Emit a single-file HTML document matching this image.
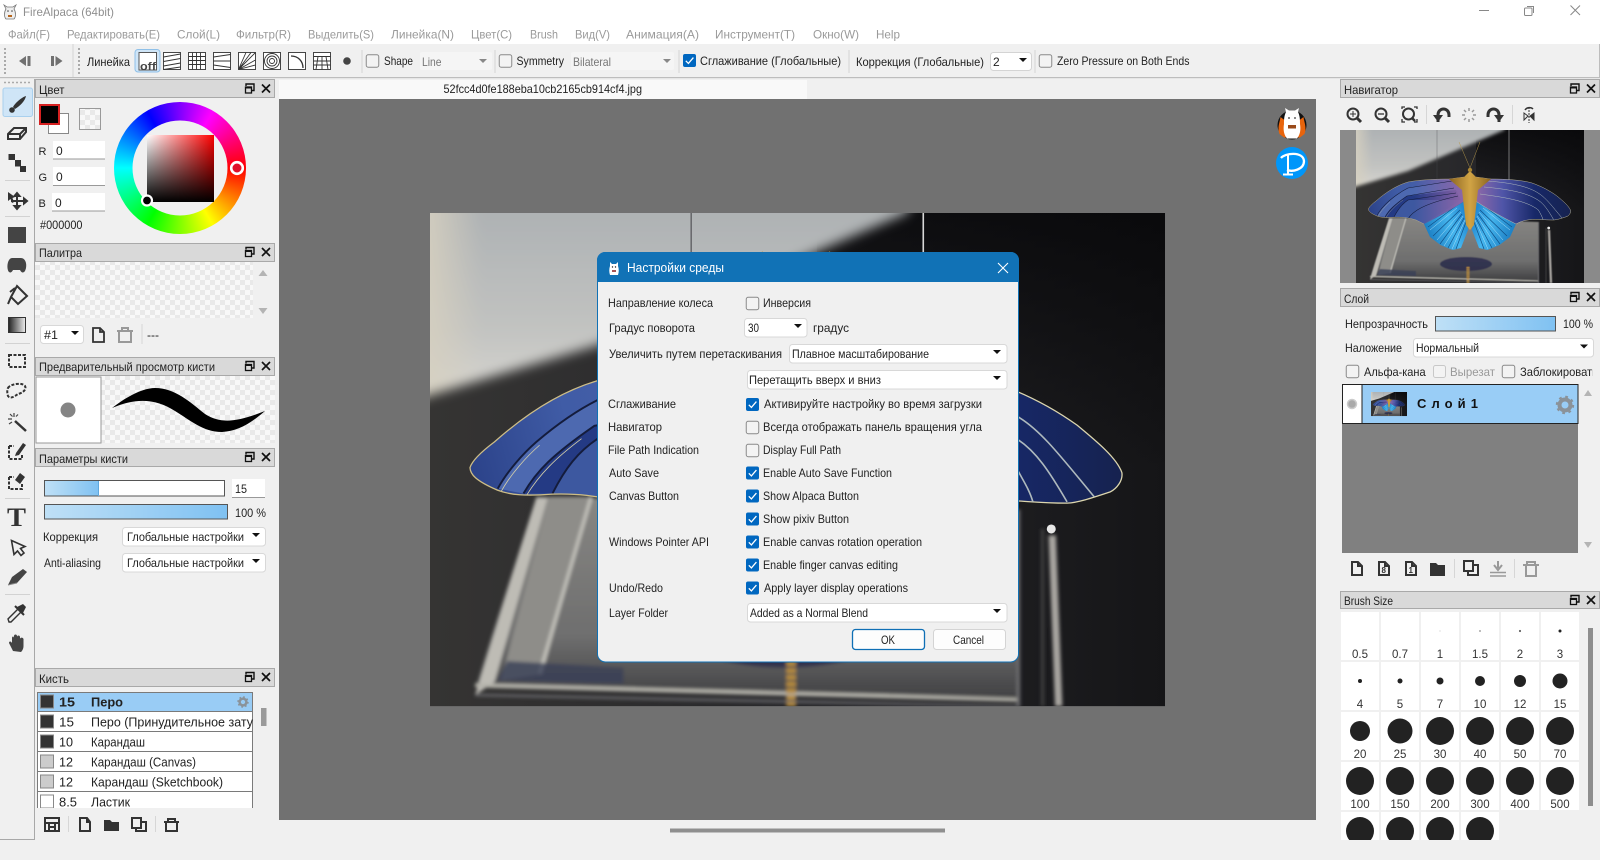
<!DOCTYPE html>
<html lang="ru"><head><meta charset="utf-8"><title>FireAlpaca</title>
<style>
html,body{margin:0;padding:0;width:1600px;height:860px;overflow:hidden;background:#f0f0f0}
svg{display:block;font-family:"Liberation Sans","Noto Sans CJK JP",sans-serif;font-size:12px;fill:#222}
</style></head><body>
<svg xmlns="http://www.w3.org/2000/svg" width="1600" height="860" viewBox="0 0 1600 860">
<defs>
<pattern id="chk" width="10" height="10" patternUnits="userSpaceOnUse"><rect width="10" height="10" fill="#f8f8f8"/><rect width="5" height="5" fill="#e9e9e9"/><rect x="5" y="5" width="5" height="5" fill="#e9e9e9"/></pattern>
<linearGradient id="blueBar" x1="0" x2="1" y1="0" y2="0"><stop offset="0" stop-color="#bfe0f6"/><stop offset="1" stop-color="#7fc1f2"/></linearGradient>
<linearGradient id="sqW" x1="0" x2="1" y1="0" y2="0"><stop offset="0" stop-color="#fff"/><stop offset="1" stop-color="#f00"/></linearGradient>
<linearGradient id="sqK" x1="0" x2="0" y1="0" y2="1"><stop offset="0" stop-color="#000" stop-opacity="0"/><stop offset="1" stop-color="#000"/></linearGradient>
<linearGradient id="grad" x1="0" x2="1" y1="0" y2="0"><stop offset="0" stop-color="#222"/><stop offset="1" stop-color="#eee"/></linearGradient>
<linearGradient id="artBg" x1="0" x2="1" y1="0" y2="0"><stop offset="0" stop-color="#353433"/><stop offset=".5" stop-color="#27272a"/><stop offset=".75" stop-color="#1e1e21"/><stop offset="1" stop-color="#151517"/></linearGradient>
<linearGradient id="artTop" gradientUnits="userSpaceOnUse" x1="0" y1="0" x2="0" y2="80"><stop offset="0" stop-color="#060608" stop-opacity=".75"/><stop offset="1" stop-color="#060608" stop-opacity="0"/></linearGradient>
<linearGradient id="wallV" gradientUnits="userSpaceOnUse" x1="0" y1="0" x2="0" y2="56"><stop offset="0" stop-color="#aeb2b4"/><stop offset=".65" stop-color="#c2c3c1"/><stop offset="1" stop-color="#d6d5d0"/></linearGradient>
<linearGradient id="wallL" gradientUnits="userSpaceOnUse" x1="0" y1="0" x2="16" y2="0"><stop offset="0" stop-color="#d6d0c0" stop-opacity=".85"/><stop offset="1" stop-color="#d6d0c0" stop-opacity="0"/></linearGradient>
<linearGradient id="glassG" gradientUnits="userSpaceOnUse" x1="0" y1="88" x2="0" y2="150"><stop offset="0" stop-color="#878683"/><stop offset=".7" stop-color="#6e6e6e"/><stop offset="1" stop-color="#424244"/></linearGradient>
<linearGradient id="wingU" gradientUnits="userSpaceOnUse" x1="12" y1="80" x2="105" y2="55"><stop offset="0" stop-color="#2b4289"/><stop offset=".35" stop-color="#405ca6"/><stop offset="1" stop-color="#4b62aa"/></linearGradient>
<linearGradient id="wingP" gradientUnits="userSpaceOnUse" x1="58" y1="0" x2="106" y2="0"><stop offset="0" stop-color="#8a62aa" stop-opacity="0"/><stop offset="1" stop-color="#8e66a8" stop-opacity=".95"/></linearGradient>
<linearGradient id="wingRf" gradientUnits="userSpaceOnUse" x1="215" y1="0" x2="120" y2="0"><stop offset="0" stop-color="#16224f"/><stop offset=".38" stop-color="#172868"/><stop offset=".72" stop-color="#4f55a8"/><stop offset="1" stop-color="#8e68a8"/></linearGradient>
<linearGradient id="wingD" gradientUnits="userSpaceOnUse" x1="70" y1="100" x2="110" y2="85"><stop offset="0" stop-color="#1c7fc4"/><stop offset=".6" stop-color="#46b6ee"/><stop offset="1" stop-color="#2388d0"/></linearGradient>
<linearGradient id="gold" x1="0" x2="1" y1="0" y2="0"><stop offset="0" stop-color="#8a6420"/><stop offset=".5" stop-color="#d1a445"/><stop offset="1" stop-color="#8a6420"/></linearGradient>
<clipPath id="artclip"><rect width="228" height="153"/></clipPath>
<clipPath id="wlclip"><path d="M108 47L93 49C78 49 62 50 52 52C40 55.500 29 63 20 71C16 74 13 77 12.400 79C12.500 81 14 83 21 86C25 87.500 29.500 87.800 38 87.200C45 87 52 87.500 60 90L68 94C80 88 95 80 110 70Z"/></clipPath>
<clipPath id="listclip"><rect x="37" y="692" width="216" height="116"/></clipPath>
<clipPath id="gridclip"><rect x="1340" y="610" width="250" height="230"/></clipPath>
<clipPath id="c1"><rect x="1360" y="360" width="66" height="24"/></clipPath>
<clipPath id="c2"><rect x="1448" y="360" width="47" height="24"/></clipPath>
<clipPath id="c3"><rect x="1518" y="360" width="75" height="24"/></clipPath>
<filter id="bl" x="-10%" y="-10%" width="120%" height="120%"><feGaussianBlur stdDeviation=".6"/></filter>
<filter id="bl2" x="-10%" y="-10%" width="120%" height="120%"><feGaussianBlur stdDeviation="1.800"/></filter>
<g id="wingLow">
 <path d="M68 94C80 88 95 80 110 70L112 100 105 118 96.600 120 84.500 115 74 107Z" fill="url(#wingD)"/>
 <path d="M72 97L100 76M77 106L104 80M84 114L106 84M92 118L108 88M100 119L110 92" stroke="#0f4f86" stroke-width=".7" fill="none"/>
 <path d="M74 100L101 78M81 110L105 82M88 116L107 86M96 119L109 90" stroke="#a9e2fa" stroke-width=".5" fill="none"/>
</g>
<g id="art" clip-path="url(#artclip)">
 <rect width="228" height="153" fill="url(#artBg)"/>
 <rect x="120" width="108" height="80" fill="url(#artTop)"/>
 <g filter="url(#bl2)">
  <polygon points="-10,-10 152,-10 148,0 52,41 0,56.500 -10,60" fill="url(#wallV)"/>
  <polygon points="-10,-10 20,-10 20,49 0,56.500 -10,60" fill="url(#wallL)"/>
 </g>
 <path d="M81 0V50" stroke="#4c4c50" stroke-width=".35"/>
 <path d="M153 0V50" stroke="#d8d8d8" stroke-width=".5"/>
 <g filter="url(#bl)">
  <polygon points="33,88 183,92 183,150 14,147" fill="url(#glassG)"/>
  <polygon points="37,88 50,88 35,143 22,145" fill="#8e8d89"/>
  <polygon points="33,88.400 36.500,88.400 20,145.500 14,149.500" fill="#bebcb5"/>
  <path d="M50 88L34 143" stroke="#c6c5be" stroke-width="1" fill="none"/>
  <polygon points="24,139 60,141 60,146 21,145" fill="#3a4058" opacity=".8"/>
  <ellipse cx="110" cy="134" rx="26" ry="7" fill="#25284a" opacity=".8"/>
  <path d="M14 146.500L183 151" stroke="#b5b4ac" stroke-width="1.300"/>
  <path d="M14 149.500L183 153" stroke="#66666a" stroke-width=".8"/>
  <path d="M182.500 92V153" stroke="#6c6c6e" stroke-width="1.100"/>
  <path d="M190 98V153" stroke="#3f3f41" stroke-width="1"/>
  <path d="M193 100L195 153" stroke="#a8a5a0" stroke-width="2.300"/>
  <path d="M112 137V153" stroke="#b58b3c" stroke-width="3" stroke-dasharray="1.500 .6"/>
 </g>
 <circle cx="192.700" cy="98" r="1.400" fill="#e8e8e8"/>
 <path d="M114 38L103 12M114 38L124 12" stroke="#b89a4a" stroke-width=".45" fill="none"/>
 <use href="#wingLow"/>
 <use href="#wingLow" transform="translate(228,0) scale(-1,1)"/>
 <g clip-path="url(#wlclip)">
  <rect width="120" height="100" fill="url(#wingU)"/>
  <path d="M21 85.500C24 80 29 74.500 33 71C40 65 46 61 52 58L100 50L110 60L51 66C44 70 38 75 29 87Z" fill="#4d69b0"/>
  <path d="M29 87C33 80 38 75 51 66L100 60L105 70L52 70C46 74 42 79 38 87Z" fill="#243a84"/>
  <path d="M38 87C42 79 46 74 52 70L105 70L68 94Z" fill="#3d58a0"/>
  <rect x="50" width="70" height="100" fill="url(#wingP)"/>
  <path d="M21 85.500C24 80 29 74.500 33 71C40 65 46 61 52 58L96 51M29 87C33 80 38 75 51 66L98 58M38 87C42 79 46 74 52 70L100 63M52 89C56 82 66 74 102 66" stroke="#141c3c" stroke-width=".6" fill="none"/>
  <path d="M22 86.500C25 81 30 75.500 34 72M30 87.500C34 81 39 76 47 70" stroke="#d5cfa8" stroke-width=".25" fill="none"/>
 </g>
 <path d="M108 47L93 49C78 49 62 50 52 52C40 55.500 29 63 20 71C16 74 13 77 12.400 79C12.500 81 14 83 21 86C25 87.500 29.500 87.800 38 87.200C45 87 52 87.500 60 90L68 94" fill="none" stroke="#cdbd86" stroke-width=".4"/>
 <path d="M120 47L135 49C150 49 166 50 176 53C186 56.500 194 61 200.700 65.800C207 71 213 76 214.600 80.500C215 83 213 85.500 211 86.500C205 88.500 201 89.800 197.600 90C190 90 186 89.500 182 89.300C174 89.300 167 90 160 94C148 88 133 80 118 70Z" fill="url(#wingRf)" stroke="#dcd6ae" stroke-width=".4"/>
 <path d="M132 51C155 53 172 56 183 63.600C190 68 196 76 206 88M128 57C150 59 170 62 182.400 70.300C188 74 192 80 197.600 89.600M124 64C145 67 170 70 182.400 80C184 83 186 86 187 89.600" fill="none" stroke="#aeb9bd" stroke-width=".5"/>
 <path d="M93 49L108 47 114 41 120 47 135 49 122 60 118 95 114 100 110 95 106 60Z" fill="url(#gold)"/>
 <circle cx="114" cy="40" r="2.200" fill="#a98432"/>
</g>
<g id="hd"><path d="M-4 -2.500V-4.500H4V2H1.500" fill="none" stroke="#111" stroke-width="1.400"/><rect x="-4.500" y="-1.500" width="6" height="6" fill="none" stroke="#111" stroke-width="1.300"/><rect x="-4.500" y="-2" width="6" height="2" fill="#111"/><path d="M12 -4L20 4M20 -4L12 4" stroke="#111" stroke-width="1.700"/></g>
<path id="ar" d="M-4 -2H4L0 2Z" fill="#111"/>
<g id="chkb"><rect width="13" height="13" rx="2" fill="#0067c0"/><path d="M2.800 6.800L5.400 9.400 10.400 3.600" fill="none" stroke="#fff" stroke-width="1.300"/></g>
<rect id="cb" width="12.500" height="12.500" x=".25" y=".25" rx="2" fill="#f3f3f3" stroke="#8a8a8a"/>
<g id="gear"><circle r="5.500" fill="none" stroke="#8a9299" stroke-width="4"/><circle r="8" fill="none" stroke="#8a9299" stroke-width="2.400" stroke-dasharray="2.700 3.580"/></g>
</defs>

<rect width="1600" height="860" fill="#f0f0f0"/>
<!-- title bar -->
<rect width="1600" height="44" fill="#fff"/>
<g transform="translate(10,12)"><path d="M-6 -7L-4 -3C-6 0 -6 5 -4 7H4C6 5 6 0 4 -3L6 -7 3 -5H-3Z" fill="#eee" stroke="#777" stroke-width=".8"/><circle cx="-2" cy="-1" r=".8" fill="#444"/><circle cx="2" cy="-1" r=".8" fill="#444"/><rect x="-2" y="3" width="4" height="2" fill="#b5651d"/></g>
<text x="23" y="16" fill="#8f8f8f" textLength="91" lengthAdjust="spacingAndGlyphs">FireAlpaca (64bit)</text>
<g fill="#9a9a9a">
<text x="8" y="38.500" textLength="42" lengthAdjust="spacingAndGlyphs">Файл(F)</text>
<text x="67" y="38.500" textLength="93" lengthAdjust="spacingAndGlyphs">Редактировать(E)</text>
<text x="177" y="38.500" textLength="43" lengthAdjust="spacingAndGlyphs">Слой(L)</text>
<text x="236" y="38.500" textLength="55" lengthAdjust="spacingAndGlyphs">Фильтр(R)</text>
<text x="308" y="38.500" textLength="66" lengthAdjust="spacingAndGlyphs">Выделить(S)</text>
<text x="391" y="38.500" textLength="63" lengthAdjust="spacingAndGlyphs">Линейка(N)</text>
<text x="471" y="38.500" textLength="41" lengthAdjust="spacingAndGlyphs">Цвет(C)</text>
<text x="530" y="38.500" textLength="28" lengthAdjust="spacingAndGlyphs">Brush</text>
<text x="575" y="38.500" textLength="35" lengthAdjust="spacingAndGlyphs">Вид(V)</text>
<text x="626" y="38.500" textLength="73" lengthAdjust="spacingAndGlyphs">Анимация(A)</text>
<text x="715" y="38.500" textLength="80" lengthAdjust="spacingAndGlyphs">Инструмент(T)</text>
<text x="813" y="38.500" textLength="46" lengthAdjust="spacingAndGlyphs">Окно(W)</text>
<text x="876" y="38.500" textLength="24" lengthAdjust="spacingAndGlyphs">Help</text>
</g>
<path d="M1479 10.500H1489" stroke="#888"/>
<rect x="1524.500" y="8" width="7.500" height="7.500" rx="1" fill="#fff" stroke="#888"/><path d="M1527 6.500H1533.500V13" fill="none" stroke="#888"/>
<path d="M1570.500 5.500L1580 15M1580 5.500L1570.500 15" stroke="#888"/>

<!-- toolbar -->
<rect x="0" y="44" width="1600" height="33" fill="#f0f0f0"/>
<rect x="0" y="77" width="1600" height="1.200" fill="#bdbdbd"/><rect x="1599" y="44" width="1" height="34" fill="#bdbdbd"/>
<path d="M5 48V76" stroke="#aaa" stroke-width="2" stroke-dasharray="2 2"/>
<path d="M79 48V76" stroke="#aaa" stroke-width="2" stroke-dasharray="2 2"/>
<path d="M73 44V77M362 50V73M495 50V73M679 50V73M849 50V73M1035 50V73" stroke="#d4d4d4"/>
<path d="M19 61L26 56V66Z" fill="#707070"/><rect x="27.500" y="56" width="3" height="10" fill="#707070"/>
<rect x="51" y="56" width="3" height="10" fill="#707070"/><path d="M55.500 56L62.500 61 55.500 66Z" fill="#707070"/>
<text x="87" y="66" textLength="43" lengthAdjust="spacingAndGlyphs">Линейка</text>
<rect x="135" y="49.500" width="25" height="22.500" rx="3" fill="#cfe5f7" stroke="#8fc0e8"/>
<rect x="139" y="52.500" width="17.500" height="17.500" fill="#fff" stroke="#555"/>
<text x="140" y="70" font-size="11" font-weight="bold" fill="#444" textLength="16" lengthAdjust="spacingAndGlyphs">off</text>
<g fill="#fff" stroke="#333" stroke-width=".9">
<rect x="163.500" y="52.500" width="17" height="17"/><path d="M163.500 57L180.500 54M163.500 61.500L180.500 58.500M163.500 66L180.500 63M163.500 69.500L180.500 67" fill="none"/>
<rect x="188.500" y="52.500" width="17" height="17"/><path d="M192.500 52.500V69.500M196.500 52.500V69.500M200.500 52.500V69.500M188.500 56.500H205.500M188.500 60.500H205.500M188.500 64.500H205.500" fill="none"/>
<rect x="213.500" y="52.500" width="17" height="17"/><path d="M213.500 57L230.500 54.500M213.500 61H230.500M213.500 65L230.500 67.500" fill="none"/>
<rect x="238.500" y="52.500" width="17" height="17"/><path d="M238.500 69.500L246 52.500M238.500 69.500L255.500 52.500M238.500 69.500L255.500 60M238.500 69.500L255.500 65M238.500 69.500L251 52.500" fill="none"/>
<rect x="263.500" y="52.500" width="17" height="17"/><circle cx="272" cy="61" r="7.500" fill="none"/><circle cx="272" cy="61" r="5" fill="none"/><circle cx="272" cy="61" r="2.500" fill="none"/>
<rect x="288.500" y="52.500" width="17" height="17"/><path d="M291 56C298 56 303 61 303 68" fill="none" stroke-width="1.300"/>
<rect x="313.500" y="52.500" width="17" height="17"/><path d="M313.500 56.500H330.500M313.500 61H330.500M313.500 65H330.500M318 56.500L316 69.500M322 56.500V69.500M326 56.500L328 69.500" fill="none"/>
</g>
<circle cx="347" cy="61" r="3.800" fill="#444"/>
<use href="#cb" x="366" y="54.500"/>
<text x="384" y="65" textLength="29" lengthAdjust="spacingAndGlyphs">Shape</text>
<rect x="420" y="52" width="72" height="18" rx="2" fill="#f5f5f5"/>
<text x="422" y="66" fill="#777" textLength="19.500" lengthAdjust="spacingAndGlyphs">Line</text>
<path d="M479 59H487L483 63Z" fill="#888"/>
<use href="#cb" x="499" y="54.500"/>
<text x="516.500" y="65" textLength="47.500" lengthAdjust="spacingAndGlyphs">Symmetry</text>
<rect x="571" y="52" width="103" height="18" rx="2" fill="#f5f5f5"/>
<text x="573" y="66" fill="#777" textLength="38" lengthAdjust="spacingAndGlyphs">Bilateral</text>
<path d="M663 59H671L667 63Z" fill="#888"/>
<use href="#chkb" x="683" y="54"/>
<text x="700" y="65" textLength="141" lengthAdjust="spacingAndGlyphs">Сглаживание (Глобальные)</text>
<text x="856" y="66" textLength="128" lengthAdjust="spacingAndGlyphs">Коррекция (Глобальные)</text>
<rect x="990.500" y="52.500" width="41" height="18" rx="3" fill="#fff" stroke="#d4d4d4"/>
<text x="993" y="66">2</text><use href="#ar" x="1023" y="60"/>
<use href="#cb" x="1039" y="54.500"/>
<text x="1057" y="65" textLength="132.500" lengthAdjust="spacingAndGlyphs">Zero Pressure on Both Ends</text>

<!-- left toolbox -->
<rect x="34" y="79" width="1" height="760" fill="#a8a8a8"/><rect x="0" y="839" width="35" height="1" fill="#a8a8a8"/>
<path d="M4 82.500H31" stroke="#aaa" stroke-dasharray="2 2" stroke-width="1.500"/>
<rect x="3" y="88" width="29.500" height="28.500" rx="2" fill="#cfe5f7" stroke="#a9d0ee"/>
<path d="M26 96C22 97 15 103 13 107L15 109C20 106 25 101 26 96Z" fill="#333"/><circle cx="12" cy="110" r="2.800" fill="#333"/>
<path d="M8 134L14 128H26V132L20 139H8ZM8 134H20L26 128M20 134V139" fill="none" stroke="#333" stroke-width="2"/>
<path d="M8.500 154H15V160H21V166H26V172H20V166.500H15V160H8.500Z" fill="#333"/>
<path d="M5 180.500H30M5 216.500H30M5 343.500H30M5 498.500H30M5 594.500H30" stroke="#d2d2d2"/>
<path d="M8 192L15 197 12.500 198 14 202 12 203 10.500 199 8 201Z" fill="#333"/>
<path d="M17 195V207M11 201H26M17 193L14.500 196H19.500ZM17 209L14.500 206H19.500ZM27 201L24 198.500V203.500Z" stroke="#333" stroke-width="2" fill="#333"/>
<rect x="8" y="227" width="18" height="16" fill="#444"/>
<path d="M12 258H21C25 258 27 263 26 268 25 273 22 274 20 270H13C11 274 8 273 7.500 268 7 263 9 258 12 258Z" fill="#444"/>
<path d="M17 286L27 296 18 304 11 297Z M11 297L8 304M10 292L15 288" fill="none" stroke="#333" stroke-width="2"/>
<rect x="8.500" y="317.500" width="17" height="15" fill="url(#grad)" stroke="#333"/>
<rect x="9" y="355" width="16" height="12" fill="none" stroke="#333" stroke-width="2" stroke-dasharray="3 1.500"/>
<path d="M8 388C10 384 22 382 25 386 27 390 22 393 18 394 14 397 10 399 8 396 7 393 7 390 8 388Z" fill="none" stroke="#333" stroke-width="2" stroke-dasharray="3 1.500"/>
<path d="M15 421L26 431" stroke="#333" stroke-width="2.500"/><path d="M14 413V417M8 419H12M10 414L12.500 416.500M18 414.500L16 416.500M9 424L12 422" stroke="#444" stroke-width="1.200"/>
<path d="M9 446H14M9 446V459H22V454" fill="none" stroke="#333" stroke-width="2" stroke-dasharray="3 1.500"/><path d="M16 453L23 443 26 445 19 455 15 456Z" fill="#333"/>
<path d="M9 477H14M9 477V489H22V484" fill="none" stroke="#333" stroke-width="2" stroke-dasharray="3 1.500"/><path d="M15 480L20 473 25 477 20 484Z" fill="#333"/>
<text x="7" y="526" font-family="Liberation Serif,serif" font-size="26" font-weight="bold" fill="#333" textLength="19" lengthAdjust="spacingAndGlyphs">T</text>
<path d="M11.500 540.500L25 546.500 20.500 548.500 24 553 21 555.500 17.500 551 14 554.500Z" fill="#f0f0f0" stroke="#333" stroke-width="1.600"/>
<path d="M8 585L12 577 23 569 27 572 17 583Z" fill="#444"/><path d="M8 585L17 583" stroke="#888"/>
<path d="M9 622L8 619 18 609 21 612 11 622Z" fill="#eee" stroke="#333" stroke-width="1.400"/><path d="M17 607L23 604 26 607 23 613Z" fill="#333"/><path d="M15 606L24 615" stroke="#333" stroke-width="2"/>
<path d="M13 651L9 643C9 641 11 641 12 643V638C12 636 14 636 14 638V636C14 634 17 634 17 636V637C17 635 20 635 20 637V639C20 637 24 637 23.500 640V646C23.500 649 22 651 21 652Z" fill="#444"/>

<!-- Color panel -->
<rect x="35.500" y="79.500" width="239" height="18" fill="#d9d9d9" stroke="#a9a9a9"/>
<text x="39" y="94" textLength="25.500" lengthAdjust="spacingAndGlyphs">Цвет</text><use href="#hd" x="250" y="88.500"/>
<rect x="48.500" y="113.500" width="20" height="20" fill="#fff" stroke="#888"/>
<rect x="40" y="105" width="19" height="19" fill="#000" stroke="#d62020" stroke-width="2"/>
<rect x="79.500" y="108.500" width="21" height="21" fill="url(#chk)" stroke="#999"/>
<text x="38.500" y="155" font-size="11">R</text>
<rect x="53" y="141" width="52" height="18" fill="#fff"/><path d="M53 159H105" stroke="#999"/><text x="56" y="155">0</text>
<text x="38.500" y="181" font-size="11">G</text>
<rect x="53" y="167" width="52" height="18.500" fill="#fff"/><path d="M53 185.500H105" stroke="#999"/><text x="56" y="181">0</text>
<text x="38.500" y="207" font-size="11">B</text>
<rect x="52" y="193" width="53" height="18" fill="#fff"/><path d="M52 211H105" stroke="#999"/><text x="55" y="207">0</text>
<text x="40" y="229" textLength="42.500" lengthAdjust="spacingAndGlyphs">#000000</text>
<foreignObject x="114" y="102" width="132" height="132"><div xmlns="http://www.w3.org/1999/xhtml" style="width:132px;height:132px;border-radius:50%;background:conic-gradient(#8000ff 0deg,#f0f 30deg,#f00 90deg,#ff0 150deg,#0f0 210deg,#0ff 270deg,#00f 330deg,#8000ff 360deg)"></div></foreignObject>
<circle cx="180" cy="168" r="47.500" fill="#f0f0f0"/>
<rect x="147" y="135" width="67" height="67" fill="url(#sqW)"/><rect x="147" y="135" width="67" height="67" fill="url(#sqK)"/>
<circle cx="237" cy="168" r="5.800" fill="#e0102a" stroke="#fff" stroke-width="2.600"/>
<circle cx="147" cy="200.500" r="5" fill="#000" stroke="#fff" stroke-width="2.200"/>

<!-- Palette -->
<rect x="35.500" y="243.500" width="239" height="18" fill="#d9d9d9" stroke="#a9a9a9"/>
<text x="39" y="257" textLength="43" lengthAdjust="spacingAndGlyphs">Палитра</text><use href="#hd" x="250" y="252"/>
<rect x="35" y="262" width="218" height="56" fill="url(#chk)"/>
<path d="M263 270L267.500 276H258.500ZM263 314L258.500 308H267.500Z" fill="#b4b4b4"/>
<rect x="40.500" y="325.500" width="43" height="18" rx="3" fill="#fff" stroke="#d8d8d8"/>
<text x="44" y="339" textLength="14" lengthAdjust="spacingAndGlyphs">#1</text><use href="#ar" x="75" y="333"/>
<path d="M93 328H100L104 332V342H93ZM100 328V332H104" fill="none" stroke="#333" stroke-width="1.800"/>
<path d="M117 331H133M122 331V328H128V331M119 331V342H131V331" fill="none" stroke="#999" stroke-width="2"/>
<path d="M142 324V344" stroke="#d6d6d6"/><text x="147" y="339">---</text>

<!-- Preview -->
<rect x="35.500" y="357.500" width="239" height="18" fill="#d9d9d9" stroke="#a9a9a9"/>
<text x="39" y="371" textLength="176" lengthAdjust="spacingAndGlyphs">Предварительный просмотр кисти</text><use href="#hd" x="250" y="366"/>
<rect x="101" y="376" width="174" height="67" fill="url(#chk)"/>
<rect x="36" y="377" width="65" height="66" fill="#fff" stroke="#999"/>
<circle cx="68" cy="410" r="7.500" fill="#858585"/>
<path d="M112 408C130 394 145 388 155 388 175 388 190 402 205 414 222 425 240 421 265 411 250 424 238 431 222 432 203 432 190 420 175 411 155 398 135 398 112 408Z" fill="#000"/>

<!-- Brush params -->
<rect x="35.500" y="448.500" width="239" height="18" fill="#d9d9d9" stroke="#a9a9a9"/>
<text x="39" y="463" textLength="89" lengthAdjust="spacingAndGlyphs">Параметры кисти</text><use href="#hd" x="250" y="457"/>
<rect x="44.500" y="480.500" width="180" height="15.500" fill="#fff" stroke="#555"/>
<rect x="45" y="481" width="53.500" height="14.500" fill="url(#blueBar)"/><path d="M98.500 481V496" stroke="#5fa8de"/>
<rect x="232" y="479" width="33" height="18" fill="#fff"/><path d="M232 497.500H265" stroke="#999"/>
<text x="235" y="493" textLength="12" lengthAdjust="spacingAndGlyphs">15</text>
<rect x="44.500" y="504.500" width="183" height="14.500" fill="url(#blueBar)" stroke="#555"/>
<text x="235" y="517" textLength="31" lengthAdjust="spacingAndGlyphs">100 %</text>
<text x="43" y="541" textLength="55" lengthAdjust="spacingAndGlyphs">Коррекция</text>
<rect x="122.500" y="527.500" width="143" height="18.500" rx="3" fill="#fff" stroke="#d8d8d8"/>
<text x="127" y="541" textLength="117" lengthAdjust="spacingAndGlyphs">Глобальные настройки</text><use href="#ar" x="256" y="535"/>
<text x="44" y="567" textLength="57" lengthAdjust="spacingAndGlyphs">Anti-aliasing</text>
<rect x="122.500" y="553.500" width="143" height="18.500" rx="3" fill="#fff" stroke="#d8d8d8"/>
<text x="127" y="567" textLength="117" lengthAdjust="spacingAndGlyphs">Глобальные настройки</text><use href="#ar" x="256" y="561"/>

<!-- Brush list -->
<rect x="35.500" y="668.500" width="239" height="18" fill="#d9d9d9" stroke="#a9a9a9"/>
<text x="39" y="683" textLength="30" lengthAdjust="spacingAndGlyphs">Кисть</text><use href="#hd" x="250" y="677"/>
<g clip-path="url(#listclip)" font-size="13">
<rect x="37.500" y="692" width="215" height="20" fill="#99ccf5"/>
<rect x="37.500" y="712" width="215" height="100" fill="#fff"/>
<path d="M37.500 692.500H252.500M37.500 711.500H252.500M37.500 731.500H252.500M37.500 751.500H252.500M37.500 771.500H252.500M37.500 791.500H252.500M37.500 692V810M252.500 692V810" stroke="#7a7a7a" fill="none"/>
<g stroke="#888"><rect x="40.500" y="695" width="13" height="13" fill="#333"/><rect x="40.500" y="715" width="13" height="13" fill="#333"/><rect x="40.500" y="735" width="13" height="13" fill="#333"/><rect x="40.500" y="755" width="13" height="13" fill="#ccc"/><rect x="40.500" y="775" width="13" height="13" fill="#ccc"/><rect x="40.500" y="795" width="13" height="13" fill="#fff"/></g>
<text x="59" y="706.500" font-weight="bold" textLength="16" lengthAdjust="spacingAndGlyphs">15</text><text x="91" y="706.500" font-weight="bold" textLength="32" lengthAdjust="spacingAndGlyphs">Перо</text>
<text x="59" y="726.500" textLength="15" lengthAdjust="spacingAndGlyphs">15</text><text x="91" y="726.500" textLength="200" lengthAdjust="spacingAndGlyphs">Перо (Принудительное затухание)</text>
<text x="59" y="746.500" textLength="14" lengthAdjust="spacingAndGlyphs">10</text><text x="91" y="746.500" textLength="54" lengthAdjust="spacingAndGlyphs">Карандаш</text>
<text x="59" y="766.500" textLength="14" lengthAdjust="spacingAndGlyphs">12</text><text x="91" y="766.500" textLength="105" lengthAdjust="spacingAndGlyphs">Карандаш (Canvas)</text>
<text x="59" y="786.500" textLength="14" lengthAdjust="spacingAndGlyphs">12</text><text x="91" y="786.500" textLength="132" lengthAdjust="spacingAndGlyphs">Карандаш (Sketchbook)</text>
<text x="59" y="806.500" textLength="18" lengthAdjust="spacingAndGlyphs">8.5</text><text x="91" y="806.500" textLength="39" lengthAdjust="spacingAndGlyphs">Ластик</text>
<use href="#gear" transform="translate(243,702) scale(.62)"/>
</g>
<rect x="261" y="708" width="5.500" height="18" fill="#9a9a9a"/>
<g fill="none" stroke="#333" stroke-width="2">
<path d="M45 818H59V831H45ZM45 823H59M49 823V831M55 823V831M49 827H55"/>
<path d="M80 818H87L90 822V831H80ZM87 818V822H90"/>
<path d="M132 818H141V828H132ZM142 822H146V831H136V829"/>
<path d="M164 822H179M168 822V819H175V822M166 822V831H177V822"/>
</g>
<path d="M104 820H110L112 822H119V831H104Z" fill="#333"/>
<path d="M68.500 816V832M155.500 816V832" stroke="#d6d6d6"/>

<!-- Canvas -->
<rect x="279" y="99" width="1037" height="721" fill="#717171"/>
<rect x="279" y="80" width="528" height="19" fill="#f9f9f9"/>
<text x="443.500" y="93" textLength="198.500" lengthAdjust="spacingAndGlyphs">52fcc4d0fe188eba10cb2165cb914cf4.jpg</text>
<use href="#art" transform="translate(430,213) scale(3.224)"/>
<rect x="670" y="828.500" width="275" height="4" fill="#8f8f8f"/>

<!-- canvas buttons -->
<circle cx="1292" cy="125" r="14.500" fill="#111"/>
<path d="M1279.500 134C1277 127 1280 122 1280.500 117L1287 122V137.500H1284ZM1304.500 134C1307 127 1304 122 1303.500 117L1297 122V137.500H1300Z" fill="#e8640c"/>
<path d="M1286 112L1285 108 1289 110.500H1295L1299 108 1298 112C1300 116 1300 120 1300 124 1301 130 1300 135 1297 138.500H1287C1284 135 1283 130 1284 124 1284 120 1284 116 1286 112Z" fill="#fff"/>
<circle cx="1289" cy="118" r=".9" fill="#333"/><circle cx="1295" cy="118" r=".9" fill="#333"/><path d="M1288 125H1296V128.500H1288Z" fill="#9a4a1a"/>
<circle cx="1292" cy="163" r="16" fill="#0096fa"/>
<path d="M1281 158C1285 153 1303 151 1304 161 1304 170 1292 172 1287 170" fill="none" stroke="#fff" stroke-width="2.300"/>
<path d="M1288 155V174M1283 174.500H1293" fill="none" stroke="#fff" stroke-width="2"/>

<!-- Navigator -->
<rect x="1340.500" y="79.500" width="259" height="18" fill="#d9d9d9" stroke="#a9a9a9"/>
<text x="1344" y="94" textLength="54" lengthAdjust="spacingAndGlyphs">Навигатор</text><use href="#hd" x="1575" y="88.500"/>
<g fill="none" stroke="#333" stroke-width="2">
<circle cx="1353" cy="114" r="5.500"/><path d="M1357 118L1361 122" stroke-width="3"/><path d="M1350 114H1356M1353 111V117" stroke-width="1"/>
<circle cx="1381" cy="114" r="5.500"/><path d="M1385 118L1389 122" stroke-width="3"/><path d="M1378 114H1384" stroke-width="1.300"/>
<circle cx="1408.500" cy="114" r="5.500"/><path d="M1412 118L1415 121" stroke-width="2.500"/><path d="M1402 109V107H1405M1417 109V107H1414M1402 119V122H1405M1417 119V122H1414" stroke-width="1.300"/>
<path d="M1438 122V115C1438 107 1449 107 1449 115V117" stroke-width="3"/><path d="M1433 115H1443L1438 122Z" fill="#333" stroke="none"/>
<path d="M1499 122V115C1499 107 1488 107 1488 115V117" stroke-width="3"/><path d="M1504 115H1494L1499 122Z" fill="#333" stroke="none"/>
<path d="M1469 108V111M1469 119V122M1462 115H1465M1473 115H1476M1464 110L1466 112M1474 110L1472 112M1464 120L1466 118M1474 120L1472 118" stroke="#999" stroke-width="1.500"/>
<path d="M1529 107V123" stroke-width="1" stroke-dasharray="2 1"/><path d="M1524 113L1528 116 1524 120Z" stroke-width="1"/><path d="M1534 113L1530 116 1534 120Z" fill="#333" stroke-width="1"/><path d="M1525 110C1527 107 1531 107 1533 109" stroke-width="1.500"/>
</g>
<path d="M1426.500 105V124M1512.500 105V124" stroke="#d6d6d6"/>
<rect x="1340" y="130" width="260" height="153" fill="#8a8a8a"/>
<use href="#art" transform="translate(1356,130)"/>

<!-- Layer -->
<rect x="1340.500" y="288.500" width="259" height="18" fill="#d9d9d9" stroke="#a9a9a9"/>
<text x="1344" y="303" textLength="25" lengthAdjust="spacingAndGlyphs">Слой</text><use href="#hd" x="1575" y="297"/>
<text x="1345" y="328" textLength="83" lengthAdjust="spacingAndGlyphs">Непрозрачность</text>
<rect x="1435.500" y="316.500" width="120" height="14.500" fill="url(#blueBar)" stroke="#555"/>
<text x="1563" y="328" textLength="30" lengthAdjust="spacingAndGlyphs">100 %</text>
<text x="1345" y="352" textLength="57" lengthAdjust="spacingAndGlyphs">Наложение</text>
<rect x="1413.500" y="338.500" width="180" height="18.500" rx="3" fill="#fff" stroke="#d8d8d8"/>
<text x="1416" y="352" textLength="63" lengthAdjust="spacingAndGlyphs">Нормальный</text><use href="#ar" x="1584" y="346.500"/>
<use href="#cb" x="1346" y="365"/>
<g clip-path="url(#c1)"><text x="1364" y="376" textLength="68" lengthAdjust="spacingAndGlyphs">Альфа-канал</text></g>
<rect x="1433.500" y="365.500" width="12" height="12" rx="2" fill="#f3f3f3" stroke="#c8c8c8"/>
<g clip-path="url(#c2)"><text x="1450" y="376" fill="#999" textLength="51" lengthAdjust="spacingAndGlyphs">Вырезать</text></g>
<use href="#cb" x="1502" y="365"/>
<g clip-path="url(#c3)"><text x="1520" y="376" textLength="78" lengthAdjust="spacingAndGlyphs">Заблокировать</text></g>
<rect x="1342" y="424" width="236" height="129" fill="#808080"/>
<rect x="1342.500" y="384.500" width="235.500" height="39" fill="#99cdf6" stroke="#222"/>
<rect x="1343" y="385" width="19" height="38" fill="#fff"/><path d="M1362 385V423" stroke="#222"/>
<circle cx="1352" cy="404" r="4.500" fill="#aaa" stroke="#ccc" stroke-width="1.500"/>
<use href="#art" transform="translate(1371,392) scale(.158)"/>
<text x="1417" y="408" font-size="13" font-weight="bold" fill="#111" textLength="61" lengthAdjust="spacing">Слой1</text>
<use href="#gear" x="1565" y="405"/>
<path d="M1588 390L1592 396H1584ZM1588 548L1584 542H1592Z" fill="#b4b4b4"/>
<g fill="none" stroke="#333" stroke-width="2">
<path d="M1352 562H1358L1362 566V575H1352ZM1358 562V566H1362"/>
<path d="M1379 562H1385L1389 566V575H1379ZM1385 562V566H1389"/>
<path d="M1406 562H1412L1416 566V575H1406ZM1412 562V566H1416"/>
<path d="M1464 561H1473V571H1464ZM1474 565H1478V575H1468V572"/>
</g>
<text x="1381.500" y="573" font-size="8" font-weight="bold" fill="#333">8</text>
<text x="1408.500" y="573" font-size="8" font-weight="bold" fill="#333">1</text>
<path d="M1430 563H1436L1438 565H1445V576H1430Z" fill="#333"/>
<path d="M1498 561V568M1494 565L1498 570 1502 565" fill="none" stroke="#999" stroke-width="2"/><path d="M1490 572.500H1506M1490 576H1506" stroke="#999" stroke-width="1.400"/>
<path d="M1523 565H1539M1527 565V562H1535V565M1526 565V576H1536V565" fill="none" stroke="#999" stroke-width="2"/>
<path d="M1454.500 559V578M1514.500 559V578" stroke="#d6d6d6"/>

<!-- Brush Size -->
<rect x="1340.500" y="591.500" width="259" height="17" fill="#d9d9d9" stroke="#a9a9a9"/>
<text x="1344" y="605" textLength="49" lengthAdjust="spacingAndGlyphs">Brush Size</text><use href="#hd" x="1575" y="600"/>
<g fill="#fff">
<rect x="1341" y="612" width="38" height="48"/><rect x="1381" y="612" width="38" height="48"/><rect x="1421" y="612" width="38" height="48"/><rect x="1461" y="612" width="38" height="48"/><rect x="1501" y="612" width="38" height="48"/><rect x="1541" y="612" width="38" height="48"/>
<rect x="1341" y="662" width="38" height="48"/><rect x="1381" y="662" width="38" height="48"/><rect x="1421" y="662" width="38" height="48"/><rect x="1461" y="662" width="38" height="48"/><rect x="1501" y="662" width="38" height="48"/><rect x="1541" y="662" width="38" height="48"/>
<rect x="1341" y="712" width="38" height="48"/><rect x="1381" y="712" width="38" height="48"/><rect x="1421" y="712" width="38" height="48"/><rect x="1461" y="712" width="38" height="48"/><rect x="1501" y="712" width="38" height="48"/><rect x="1541" y="712" width="38" height="48"/>
<rect x="1341" y="762" width="38" height="48"/><rect x="1381" y="762" width="38" height="48"/><rect x="1421" y="762" width="38" height="48"/><rect x="1461" y="762" width="38" height="48"/><rect x="1501" y="762" width="38" height="48"/><rect x="1541" y="762" width="38" height="48"/>
<rect x="1341" y="812" width="38" height="28"/><rect x="1381" y="812" width="38" height="28"/><rect x="1421" y="812" width="38" height="28"/><rect x="1461" y="812" width="38" height="28"/>
</g>
<g clip-path="url(#gridclip)" fill="#222">
<circle cx="1440" cy="631" r=".6" fill="#ccc"/><circle cx="1480" cy="631" r="1" fill="#aaa"/><circle cx="1520" cy="631" r="1.100" fill="#666"/><circle cx="1560" cy="631" r="1.500"/>
<circle cx="1360" cy="681" r="2"/><circle cx="1400" cy="681" r="2.500"/><circle cx="1440" cy="681" r="3.500"/><circle cx="1480" cy="681" r="5"/><circle cx="1520" cy="681" r="6"/><circle cx="1560" cy="681" r="7.500"/>
<circle cx="1360" cy="731" r="10"/><circle cx="1400" cy="731" r="12.500"/><circle cx="1440" cy="731" r="14"/><circle cx="1480" cy="731" r="14"/><circle cx="1520" cy="731" r="14"/><circle cx="1560" cy="731" r="14"/>
<circle cx="1360" cy="781" r="14"/><circle cx="1400" cy="781" r="14"/><circle cx="1440" cy="781" r="14"/><circle cx="1480" cy="781" r="14"/><circle cx="1520" cy="781" r="14"/><circle cx="1560" cy="781" r="14"/>
<circle cx="1360" cy="831" r="14"/><circle cx="1400" cy="831" r="14"/><circle cx="1440" cy="831" r="14"/><circle cx="1480" cy="831" r="14"/>
</g>
<g text-anchor="middle" fill="#333" font-size="11.500">
<text x="1360" y="658">0.5</text><text x="1400" y="658">0.7</text><text x="1440" y="658">1</text><text x="1480" y="658">1.5</text><text x="1520" y="658">2</text><text x="1560" y="658">3</text>
<text x="1360" y="708">4</text><text x="1400" y="708">5</text><text x="1440" y="708">7</text><text x="1480" y="708">10</text><text x="1520" y="708">12</text><text x="1560" y="708">15</text>
<text x="1360" y="758">20</text><text x="1400" y="758">25</text><text x="1440" y="758">30</text><text x="1480" y="758">40</text><text x="1520" y="758">50</text><text x="1560" y="758">70</text>
<text x="1360" y="808">100</text><text x="1400" y="808">150</text><text x="1440" y="808">200</text><text x="1480" y="808">300</text><text x="1520" y="808">400</text><text x="1560" y="808">500</text>
</g>
<rect x="1588" y="628" width="5" height="178" fill="#8e8e8e"/>

<!-- Dialog -->
<rect x="597.500" y="252.500" width="421" height="409.500" rx="8" fill="#f0f0f0" stroke="#1071b5"/>
<path d="M597 282V260a8 8 0 0 1 8-8H1011a8 8 0 0 1 8 8V282Z" fill="#1172b6"/>
<path d="M610 262L612 264H616L618 262 618 266C619 269 619 272 618 275H610C609 272 609 269 610 266Z" fill="#fff"/><circle cx="612.500" cy="267" r=".7" fill="#222"/><circle cx="615.500" cy="267" r=".7" fill="#222"/><rect x="612" y="270" width="4" height="2" fill="#a55"/>
<text x="627" y="272" fill="#fff" font-size="12.500" textLength="97" lengthAdjust="spacingAndGlyphs">Настройки среды</text>
<path d="M998 263L1008 273M1008 263L998 273" stroke="#fff" stroke-width="1.100"/>

<text x="608" y="307" textLength="105" lengthAdjust="spacingAndGlyphs">Направление колеса</text>
<use href="#cb" x="746" y="297"/><text x="763" y="307" textLength="48" lengthAdjust="spacingAndGlyphs">Инверсия</text>
<text x="609" y="332" textLength="86" lengthAdjust="spacingAndGlyphs">Градус поворота</text>
<rect x="744.500" y="318.500" width="62.500" height="18.500" rx="3" fill="#fff" stroke="#d8d8d8"/>
<text x="748" y="332" textLength="11" lengthAdjust="spacingAndGlyphs">30</text><use href="#ar" x="798" y="326"/>
<text x="813" y="332" textLength="36" lengthAdjust="spacingAndGlyphs">градус</text>
<text x="609" y="358" textLength="173" lengthAdjust="spacingAndGlyphs">Увеличить путем перетаскивания</text>
<rect x="789.500" y="344.500" width="217.500" height="18.500" rx="3" fill="#fff" stroke="#d8d8d8"/>
<text x="792" y="358" textLength="137" lengthAdjust="spacingAndGlyphs">Плавное масштабирование</text><use href="#ar" x="997" y="352"/>
<rect x="747.500" y="370.500" width="259.500" height="18.500" rx="3" fill="#fff" stroke="#d8d8d8"/>
<text x="749" y="384" textLength="132" lengthAdjust="spacingAndGlyphs">Перетащить вверх и вниз</text><use href="#ar" x="997" y="378"/>

<text x="608" y="408" textLength="68" lengthAdjust="spacingAndGlyphs">Сглаживание</text>
<use href="#chkb" x="746" y="398"/><text x="764" y="408" textLength="218" lengthAdjust="spacingAndGlyphs">Активируйте настройку во время загрузки</text>
<text x="608" y="431" textLength="54" lengthAdjust="spacingAndGlyphs">Навигатор</text>
<use href="#cb" x="746" y="421"/><text x="763" y="431" textLength="219" lengthAdjust="spacingAndGlyphs">Всегда отображать панель вращения угла</text>
<text x="608" y="454" textLength="91" lengthAdjust="spacingAndGlyphs">File Path Indication</text>
<use href="#cb" x="746" y="444"/><text x="763" y="454" textLength="78" lengthAdjust="spacingAndGlyphs">Display Full Path</text>
<text x="609" y="477" textLength="50" lengthAdjust="spacingAndGlyphs">Auto Save</text>
<use href="#chkb" x="746" y="466.500"/><text x="763" y="477" textLength="129" lengthAdjust="spacingAndGlyphs">Enable Auto Save Function</text>
<text x="609" y="500" textLength="70" lengthAdjust="spacingAndGlyphs">Canvas Button</text>
<use href="#chkb" x="746" y="489.500"/><text x="763" y="500" textLength="96" lengthAdjust="spacingAndGlyphs">Show Alpaca Button</text>
<use href="#chkb" x="746" y="512.500"/><text x="763" y="523" textLength="86" lengthAdjust="spacingAndGlyphs">Show pixiv Button</text>
<text x="609" y="546" textLength="100" lengthAdjust="spacingAndGlyphs">Windows Pointer API</text>
<use href="#chkb" x="746" y="535.500"/><text x="763" y="546" textLength="159" lengthAdjust="spacingAndGlyphs">Enable canvas rotation operation</text>
<use href="#chkb" x="746" y="558.500"/><text x="763" y="569" textLength="135" lengthAdjust="spacingAndGlyphs">Enable finger canvas editing</text>
<text x="609" y="592" textLength="54" lengthAdjust="spacingAndGlyphs">Undo/Redo</text>
<use href="#chkb" x="746" y="581.500"/><text x="764" y="592" textLength="144" lengthAdjust="spacingAndGlyphs">Apply layer display operations</text>
<text x="609" y="617" textLength="59" lengthAdjust="spacingAndGlyphs">Layer Folder</text>
<rect x="747.500" y="603.500" width="259.500" height="18.500" rx="3" fill="#fff" stroke="#d8d8d8"/>
<text x="750" y="617" textLength="118" lengthAdjust="spacingAndGlyphs">Added as a Normal Blend</text><use href="#ar" x="997" y="611"/>
<rect x="852.500" y="629.500" width="72" height="20" rx="3" fill="#fdfdfd" stroke="#0f6fb5" stroke-width="1.300"/>
<text x="881" y="644" textLength="14" lengthAdjust="spacingAndGlyphs">OK</text>
<rect x="933.500" y="629.500" width="72" height="20" rx="3" fill="#fdfdfd" stroke="#d4d4d4"/>
<text x="953" y="644" textLength="31" lengthAdjust="spacingAndGlyphs">Cancel</text>
</svg>
</body></html>
